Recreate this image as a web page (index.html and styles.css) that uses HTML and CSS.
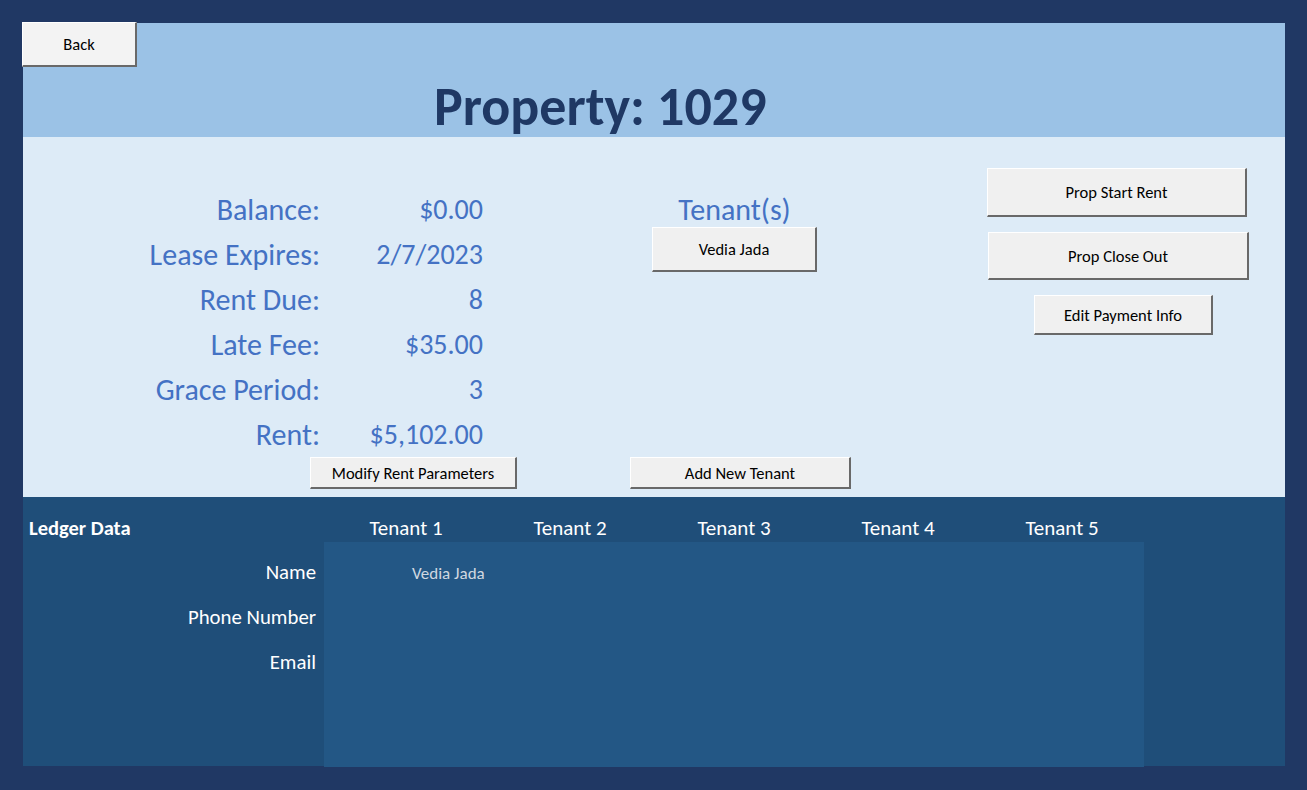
FILE: index.html
```html
<!DOCTYPE html>
<html lang="en">
<head>
<meta charset="utf-8">
<title>Property: 1029</title>
<link rel="stylesheet" href="styles.css">
</head>
<body>
<div class="form">
  <header class="header">
    <button class="btn btn-back">Back</button>
    <h1 class="title">Property: 1029</h1>
  </header>

  <section class="content">
    <div class="fields">
      <div class="field-grid">
        <div class="lbl">Balance:</div><div class="val">$0.00</div>
        <div class="lbl">Lease Expires:</div><div class="val">2/7/2023</div>
        <div class="lbl">Rent Due:</div><div class="val">8</div>
        <div class="lbl">Late Fee:</div><div class="val">$35.00</div>
        <div class="lbl">Grace Period:</div><div class="val">3</div>
        <div class="lbl">Rent:</div><div class="val">$5,102.00</div>
      </div>
      <button class="btn btn-modify">Modify Rent Parameters</button>
    </div>

    <div class="tenants">
      <div class="tenants-title">Tenant(s)</div>
      <button class="btn btn-tenant">Vedia Jada</button>
      <button class="btn btn-add">Add New Tenant</button>
    </div>

    <div class="actions">
      <button class="btn btn-start">Prop Start Rent</button>
      <button class="btn btn-close">Prop Close Out</button>
      <button class="btn btn-edit">Edit Payment Info</button>
    </div>
  </section>

  <section class="ledger">
    <div class="ledger-head">
      <div class="ledger-title">Ledger Data</div>
      <div class="th">Tenant 1</div>
      <div class="th">Tenant 2</div>
      <div class="th">Tenant 3</div>
      <div class="th">Tenant 4</div>
      <div class="th">Tenant 5</div>
    </div>
    <div class="ledger-body">
      <div class="row-labels">
        <div class="rl">Name</div>
        <div class="rl">Phone Number</div>
        <div class="rl">Email</div>
      </div>
      <div class="data-box">
        <div class="data-row">
          <div class="cell">Vedia Jada</div>
          <div class="cell"></div>
          <div class="cell"></div>
          <div class="cell"></div>
          <div class="cell"></div>
        </div>
      </div>
    </div>
  </section>
</div>
</body>
</html>
```

FILE: styles.css
```css
* { box-sizing: border-box; }

html, body {
  margin: 0;
  padding: 0;
}

body {
  background: #203864;
  font-family: Carlito, Calibri, Lato, "Noto Sans", sans-serif;
  width: 1307px;
  height: 790px;
  overflow: hidden;
  padding-top: 23px;
}

.form {
  margin-left: 23px;
  width: 1262px;
  height: 743px;
}

/* buttons */
.btn {
  display: block;
  font-family: inherit;
  font-size: 16.5px;
  color: #000;
  background: #f0f0f0;
  border-style: solid;
  border-width: 1px 2px 2px 1px;
  border-color: #ffffff #696969 #696969 #ffffff;
  padding: 0;
  margin: 0;
  text-align: center;
  cursor: pointer;
}

/* header */
.header {
  display: flow-root;
  height: 114px;
  background: #9bc2e6;
}

.btn-back {
  width: 115px;
  height: 45px;
  margin: -1px 0 0 -1px;
  background: #f3f3f3;
}

.title {
  margin: 10px 0 0 0;
  padding-left: 411px;
  font-size: 54px;
  line-height: 60px;
  font-weight: 700;
  color: #1f3864;
  white-space: nowrap;
}

/* content */
.content {
  height: 360px;
  background: #ddebf7;
  display: flex;
  align-items: flex-start;
}

.fields {
  width: 494px;
  padding-top: 50px;
}

.field-grid {
  display: grid;
  grid-template-columns: 297px 163px;
  grid-auto-rows: 45px;
  align-items: center;
  font-size: 30px;
  color: #4472c4;
}

.lbl, .val {
  text-align: right;
  line-height: 45px;
  white-space: nowrap;
}

.val {
  font-size: 28px;
}

.btn-modify {
  margin-left: 287px;
  width: 207px;
  height: 32px;
}

.tenants {
  margin-left: 113px;
  width: 221px;
  height: 352px;
  padding-top: 56px;
  display: flex;
  flex-direction: column;
}

.tenants-title {
  font-size: 30px;
  line-height: 34px;
  color: #4472c4;
  text-align: center;
  padding-right: 12px;
  white-space: nowrap;
}

.btn-tenant {
  margin-left: 22px;
  width: 165px;
  height: 45px;
}

.btn-add {
  margin-top: auto;
  width: 221px;
  height: 32px;
}

.actions {
  margin-left: 136px;
  width: 262px;
  padding-top: 31px;
}

.btn-start {
  width: 260px;
  height: 49px;
}

.btn-close {
  margin: 15px 0 0 1px;
  width: 261px;
  height: 48px;
}

.btn-edit {
  margin: 15px 0 0 47px;
  width: 179px;
  height: 40px;
}

/* ledger */
.ledger {
  height: 269px;
  background: #1f4e79;
  color: #ffffff;
}

.ledger-head {
  height: 45px;
  padding-top: 20px;
  display: grid;
  grid-template-columns: 301px repeat(5, 164px);
  font-size: 21px;
  line-height: 22px;
}

.ledger-title {
  font-weight: 700;
  font-size: 20.5px;
  padding-left: 6px;
}

.th {
  text-align: center;
  white-space: nowrap;
}

.ledger-body {
  display: grid;
  grid-template-columns: 293px 820px;
  column-gap: 8px;
}

.row-labels {
  padding-top: 8px;
}

.rl {
  height: 45px;
  line-height: 45px;
  font-size: 20.8px;
  text-align: right;
  white-space: nowrap;
}

.data-box {
  height: 225px;
  background: #235785;
  padding-top: 9px;
}

.data-row {
  display: grid;
  grid-template-columns: repeat(5, 164px);
}

.cell {
  height: 45px;
  line-height: 45px;
  font-size: 17px;
  color: #d0d7e0;
  padding-left: 88px;
  white-space: nowrap;
}
```
